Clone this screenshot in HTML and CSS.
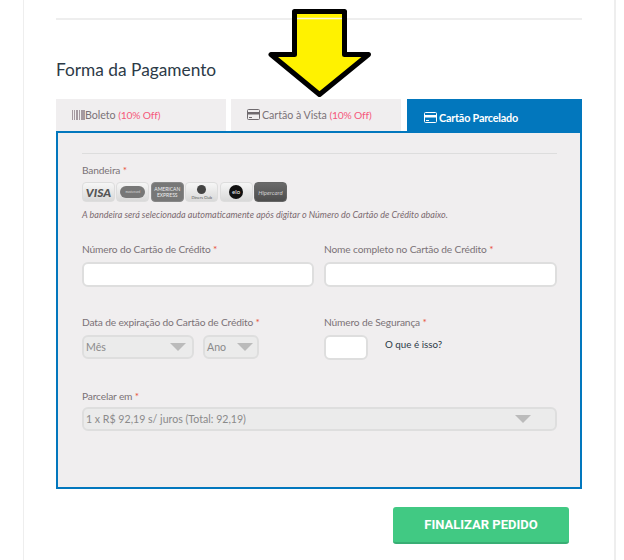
FILE: index.html
```html
<!DOCTYPE html>
<html lang="pt-BR">
<head>
    <meta charset="UTF-8"/>
    <title>Forma da Pagamento</title>
    <link rel="stylesheet" href="styles.css">
</head>
<body>
<div class="page">
    <hr class="top-line"/>
    <h2 class="title">Forma da Pagamento</h2>

    <div class="tabs">
        <div class="tab tab-boleto">
            <svg class="ico" width="13" height="10" viewBox="0 0 13 10"><path d="M0 0h1v10H0zM2 0h1v10H2zM4 0h2v10H4zM7 0h1v10H7zM9 0h2v10H9zM11 0h2v10h-2z" fill="#a59aa1"/></svg><span>Boleto <span class="off">(10% Off)</span></span>
        </div>
        <div class="tab tab-vista">
            <svg class="ico" width="13" height="11" viewBox="0 0 13 11"><path d="M1.500.5h10a1 1 0 0 1 1 1v8a1 1 0 0 1-1 1h-10a1 1 0 0 1-1-1v-8a1 1 0 0 1 1-1z" fill="none" stroke="#6f6a6e"/><path d="M1 3h11v2.500H1zM2 8h3v1H2z" fill="#6f6a6e"/></svg><span>Cartão à Vista <span class="off">(10% Off)</span></span>
        </div>
        <div class="tab active">
            <svg class="ico" width="13" height="11" viewBox="0 0 13 11"><path d="M1.500.5h10a1 1 0 0 1 1 1v8a1 1 0 0 1-1 1h-10a1 1 0 0 1-1-1v-8a1 1 0 0 1 1-1z" fill="none" stroke="#fff"/><path d="M1 3h11v2.500H1zM2 8h3v1H2z" fill="#fff"/></svg><span>Cartão Parcelado</span>
        </div>
    </div>

    <div class="panel">
        <hr class="panel-line"/>
        <div class="label first">Bandeira <span class="req">*</span></div>
        <div class="cards">
            <span class="card visa">VISA</span>
            <span class="card mc"><i>mastercard</i></span>
            <span class="card amex">AMERICAN EXPRESS</span>
            <span class="card diners"><b></b>Diners Club</span>
            <span class="card elo"><em>elo</em></span>
            <span class="card hiper">Hipercard</span>
        </div>
        <p class="note">A bandeira será selecionada automaticamente após digitar o Número do Cartão de Crédito abaixo.</p>

        <div class="row row-card">
            <div>
                <div class="label">Número do Cartão de Crédito <span class="req">*</span></div>
                <input class="input" type="text"/>
            </div>
            <div>
                <div class="label">Nome completo no Cartão de Crédito <span class="req">*</span></div>
                <input class="input" type="text"/>
            </div>
        </div>

        <div class="row row-exp">
            <div>
                <div class="label">Data de expiração do Cartão de Crédito <span class="req">*</span></div>
                <div class="selects">
                    <div class="select mes">Mês<span class="caret"></span></div>
                    <div class="select ano">Ano<span class="caret"></span></div>
                </div>
            </div>
            <div>
                <div class="label">Número de Segurança <span class="req">*</span></div>
                <div class="cvv-row">
                    <input class="input cvv" type="text"/>
                    <a class="what" href="#">O que é isso?</a>
                </div>
            </div>
        </div>

        <div class="label parcelar">Parcelar em <span class="req">*</span></div>
        <div class="select wide">1 x R$ 92,19 s/ juros (Total: 92,19)<span class="caret"></span></div>
    </div>

    <div class="actions">
        <button class="finish">FINALIZAR PEDIDO</button>
    </div>

    <!-- seta amarela por cima da pagina -->
    <svg class="arrow" width="110" height="92" viewBox="0 0 110 92">
        <path d="M26.500 3.500h50v43h24L51.500 86.500 3 46.500h23.500z" fill="#fff200" stroke="#000" stroke-width="5" stroke-linejoin="round"/>
        <path d="M29 10.500h45" stroke="#f4f1e0" stroke-width="1.500"/>
    </svg>
</div>
</body>
</html>
```

FILE: styles.css
```css
* {
    box-sizing: border-box;
}

body {
    margin: 0;
    background: #fff;
    font-family: "Lato", "Noto Sans", sans-serif;
    color: #6f6a6e;
}

.page {
    position: relative;
    width: 593px;
    height: 560px;
    margin-left: 23px;
    padding: 18px 32px 0 32px;
    border-left: 1px solid #eee;
    border-right: 2px solid #eee;
    overflow: hidden;
}

.top-line {
    height: 2px;
    margin: 0;
    border: 0;
    background: #eee;
}

.title {
    margin: 39px 0 0;
    height: 40px;
    font-size: 17.300px;
    line-height: 22px;
    font-weight: 400;
    color: #2c3a47;
}

/* abas */
.tabs {
    display: flex;
    height: 32px;
}

.tab {
    display: flex;
    align-items: center;
    gap: 1px;
    width: 170px;
    height: 32px;
    padding: 0 0 1px 16px;
    margin-right: 5px;
    background: #f0eeef;
    font-size: 10.700px;
    letter-spacing: -0.05px;
    color: #7b7277;
    white-space: nowrap;
}

.tab-boleto {
    gap: 0;
}

.tab-vista {
    gap: 2px;
    margin-right: 6px;
}

.tab.active {
    width: 175px;
    margin: 0;
    padding: 4px 0 0 17px;
    gap: 2px;
    background: #0277bd;
    color: #fff;
    font-size: 10.800px;
    font-weight: 700;
    letter-spacing: -0.2px;
}

.off {
    color: #f5587b;
    font-size: 10.300px;
    letter-spacing: -0.2px;
}

/* painel */
.panel {
    height: 358px;
    padding: 20px 23px 0 24px;
    border: 2px solid #0277bd;
    background: #f0eeef;
}

.panel-line {
    height: 1px;
    margin: 0;
    border: 0;
    background: #ddd;
}

.label {
    height: 15px;
    font-size: 10.200px;
    letter-spacing: -0.15px;
    line-height: 17px;
    color: #7b7277;
}

.label.first {
    margin-top: 8px;
}

.req {
    color: #e8503a;
}

.cards {
    display: flex;
    gap: 1.400px;
    margin-top: 5px;
}

.card {
    display: flex;
    align-items: center;
    justify-content: center;
    flex-direction: column;
    width: 33px;
    height: 20px;
    border-radius: 4px;
    background: linear-gradient(#f6f6f6, #d9d9d9);
    border: 1px solid #ddd;
    overflow: hidden;
    text-align: center;
    font-size: 4px;
    line-height: 5px;
    color: #555;
}

.visa {
    font-size: 12px;
    font-weight: 900;
    font-style: italic;
    color: #555;
}

.mc i {
    display: block;
    width: 25px;
    height: 12px;
    border-radius: 6px;
    background: #777;
    color: #ddd;
    font-size: 3px;
    line-height: 12px;
    font-style: normal;
}

.amex {
    background: #777;
    border-color: #888;
    color: #eee;
    font-size: 5px;
    line-height: 6px;
}

.diners b {
    display: block;
    width: 9px;
    height: 9px;
    border-radius: 50%;
    background: #444;
    margin-bottom: 1px;
}

.elo em {
    display: block;
    width: 14px;
    height: 14px;
    border-radius: 50%;
    background: #111;
    color: #eee;
    font-size: 6px;
    line-height: 14px;
    font-style: normal;
}

.hiper {
    background: linear-gradient(#6a6a6a, #4e4e4e);
    border-color: #666;
    color: #ccc;
    font-size: 6px;
    font-style: italic;
}

.note {
    margin: 7px 0 0;
    font-size: 9.030px;
    line-height: 12px;
    font-style: italic;
    color: #7b6a70;
    white-space: nowrap;
}

.row {
    display: grid;
    grid-template-columns: 232px 233px;
    gap: 10px;
}

.row-card {
    margin-top: 20px;
}

.row-exp {
    margin-top: 27px;
}

.input {
    display: block;
    width: 100%;
    height: 25px;
    margin-top: 6px;
    border: 2px solid #dedede;
    border-radius: 6px;
    background: #fff;
    outline: 0;
}

.selects {
    display: flex;
    gap: 9px;
    margin-top: 6px;
}

.select {
    position: relative;
    height: 24px;
    padding-left: 2px;
    border: 2px solid #dedede;
    border-radius: 6px;
    background: #ebebeb;
    font-size: 10.600px;
    line-height: 20px;
    color: #8a8a8a;
}

.mes {
    width: 112px;
}

.ano {
    width: 56px;
}

.caret {
    position: absolute;
    top: 6px;
    right: 6px;
    border-left: 8px solid transparent;
    border-right: 8px solid transparent;
    border-top: 8px solid #bbb;
}

.ano .caret {
    right: 4px;
}

.cvv-row {
    display: flex;
    align-items: flex-start;
}

.cvv {
    width: 44px;
}

.what {
    margin: 8px 0 0 17px;
    font-size: 9.800px;
    line-height: 14px;
    color: #2c3a47;
    text-decoration: none;
}

.parcelar {
    margin-top: 28px;
}

.wide {
    margin-top: 4px;
}

.wide .caret {
    right: 24px;
}

/* botao */
.actions {
    display: flex;
    justify-content: flex-end;
    padding: 18px 13px 0 0;
}

.finish {
    width: 176px;
    height: 37px;
    border: 0;
    border-bottom: 2px solid #38ae74;
    border-radius: 3px;
    background: #41c983;
    color: #fff;
    font-family: "Roboto", sans-serif;
    font-size: 13px;
    font-weight: 700;
}

.arrow {
    position: absolute;
    left: 244px;
    top: 8px;
}
```
